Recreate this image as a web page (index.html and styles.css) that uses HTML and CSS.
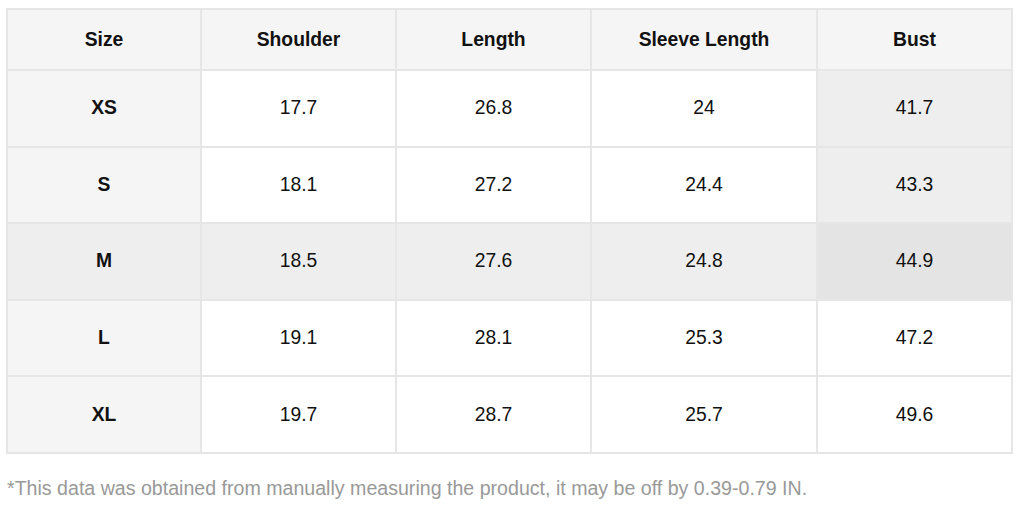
FILE: index.html
```html
<!DOCTYPE html>
<html>
<head>
<meta charset="utf-8">
<link rel="stylesheet" href="styles.css">
</head>
<body>
<div class="wrap">
<table class="size-table">
  <colgroup>
    <col class="c-size">
    <col class="c-std">
    <col class="c-std">
    <col class="c-wide">
    <col class="c-std">
  </colgroup>
  <thead>
    <tr>
      <th>Size</th><th>Shoulder</th><th>Length</th><th>Sleeve Length</th><th>Bust</th>
    </tr>
  </thead>
  <tbody>
    <tr><th>XS</th><td>17.7</td><td>26.8</td><td>24</td><td class="bust">41.7</td></tr>
    <tr><th>S</th><td>18.1</td><td>27.2</td><td>24.4</td><td class="bust">43.3</td></tr>
    <tr class="hl"><th>M</th><td>18.5</td><td>27.6</td><td>24.8</td><td class="bust">44.9</td></tr>
    <tr><th>L</th><td>19.1</td><td>28.1</td><td>25.3</td><td>47.2</td></tr>
    <tr><th>XL</th><td>19.7</td><td>28.7</td><td>25.7</td><td>49.6</td></tr>
  </tbody>
</table>
<p class="note">*This data was obtained from manually measuring the product, it may be off by 0.39-0.79 IN.</p>
</div>
</body>
</html>
```

FILE: styles.css
```css
html, body {
  margin: 0;
  padding: 0;
  background: #ffffff;
}
body {
  font-family: "Liberation Sans", Arial, sans-serif;
  color: #111111;
}
.wrap {
  padding: 8px 11px 0 6px;
}
.size-table {
  border-collapse: collapse;
  width: 1007px;
  table-layout: fixed;
  font-size: 19.3px;
}
.c-size { width: 194px; }
.c-std { width: 195px; }
.c-wide { width: 226px; }
.size-table th,
.size-table td {
  border: 2px solid #e6e6e6;
  text-align: center;
  vertical-align: middle;
  padding: 0;
}
.size-table thead th {
  height: 59px;
  background: #f5f5f5;
  font-weight: bold;
  color: #111;
}
.size-table tbody th,
.size-table tbody td {
  height: 74.6px;
}
.size-table tbody th {
  background: #f5f5f5;
  font-weight: bold;
}
.size-table tbody td {
  background: #ffffff;
  font-weight: normal;
}
.size-table tbody td.bust {
  background: #eeeeee;
}
.size-table tr.hl th,
.size-table tr.hl td {
  background: #eeeeee;
}
.size-table tr.hl td.bust {
  background: #e4e4e4;
}
.note {
  margin: 23px 0 0 1px;
  font-size: 19.6px;
  color: #999999;
}
```
